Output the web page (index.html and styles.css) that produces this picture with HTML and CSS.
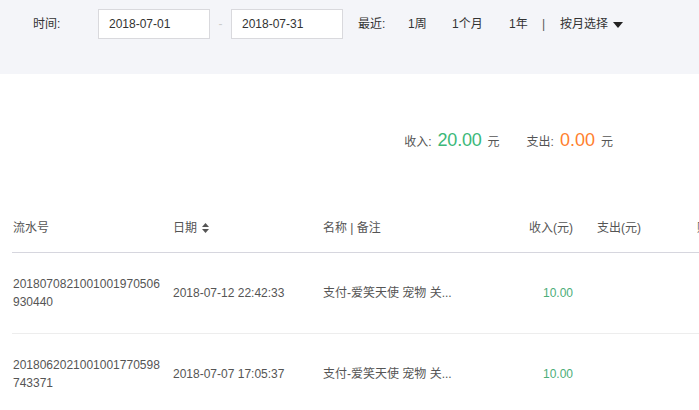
FILE: index.html
```html
<!DOCTYPE html>
<html lang="zh">
<head>
<meta charset="utf-8">
<title>账单</title>
<link rel="stylesheet" href="styles.css">
</head>
<body>
<div class="filter">
  <span class="label">时间:</span>
  <div class="input">2018-07-01</div>
  <span class="dash">-</span>
  <div class="input">2018-07-31</div>
  <span class="recent">最近:</span>
  <span class="opt opt-week">1周</span>
  <span class="opt opt-month">1个月</span>
  <span class="opt opt-year">1年</span>
  <span class="sep">|</span>
  <span class="month-pick">按月选择<svg class="caret" width="10" height="6" viewBox="0 0 10 6"><path d="M0 0H10L5 6Z" fill="#222"/></svg></span>
</div>

<div class="summary">
  <span class="s-label">收入:</span><span class="s-in">20.00</span><span class="s-unit">元</span>
  <span class="s-label s-gap">支出:</span><span class="s-out">0.00</span><span class="s-unit">元</span>
</div>

<div class="table">
  <div class="row head">
    <div class="c c-no">流水号</div>
    <div class="c c-date">日期<svg class="sort" width="7" height="10" viewBox="0 0 7 10"><path d="M3.5 0L7 4H0Z M0 6H7L3.5 10Z" fill="#555"/></svg></div>
    <div class="c c-name">名称 | 备注</div>
    <div class="c c-in">收入(元)</div>
    <div class="c c-out">支出(元)</div>
    <div class="c c-bal">账户余额(元)</div>
  </div>
  <div class="row">
    <div class="c c-no">2018070821001001970506930440</div>
    <div class="c c-date">2018-07-12 22:42:33</div>
    <div class="c c-name">支付-爱笑天使 宠物 关...</div>
    <div class="c c-in money">10.00</div>
    <div class="c c-out"></div>
    <div class="c c-bal"></div>
  </div>
  <div class="row">
    <div class="c c-no">2018062021001001770598743371</div>
    <div class="c c-date">2018-07-07 17:05:37</div>
    <div class="c c-name">支付-爱笑天使 宠物 关...</div>
    <div class="c c-in money">10.00</div>
    <div class="c c-out"></div>
    <div class="c c-bal"></div>
  </div>
</div>
</body>
</html>
```

FILE: styles.css
```css
html, body {
  margin: 0;
  padding: 0;
  background: #fff;
  overflow: hidden;
}
body {
  width: 699px;
  height: 410px;
  font-family: "Liberation Sans", "Noto Sans CJK SC", sans-serif;
  font-size: 12px;
  color: #333;
}
.filter {
  height: 74px;
  background: #f4f5f9;
  display: flex;
  align-items: flex-start;
  padding-left: 33px;
  box-sizing: border-box;
  padding-top: 9px;
}
.filter > span {
  line-height: 31px;
  white-space: nowrap;
}
.label {
  width: 65px;
  color: #333;
}
.input {
  width: 112px;
  height: 30px;
  box-sizing: border-box;
  border: 1px solid #d9d9dd;
  background: #fff;
  padding-left: 10px;
  line-height: 29px;
  color: #333;
}
.dash {
  width: 21px;
  text-align: center;
  color: #ccc;
}
.recent {
  margin-left: 15px;
  width: 50px;
}
.opt-week { width: 44px; }
.opt-month { width: 57px; }
.opt-year { width: 33px; }
.sep { width: 18px; color: #555; }
.month-pick {
  display: inline-flex;
  align-items: center;
}
.caret { margin-left: 5px; }

.summary {
  display: flex;
  justify-content: flex-end;
  align-items: baseline;
  padding-right: 86px;
  margin-top: 51px;
  height: 30px;
  line-height: 30px;
}
.s-label { color: #555; font-size: 12px; margin-right: 6px; }
.s-gap { margin-left: 27px; }
.s-in { color: #3cb879; font-size: 18px; letter-spacing: -0.2px; }
.s-out { color: #ff7f2e; font-size: 18px; }
.s-unit { color: #555; margin-left: 6px; }

.table {
  margin-top: 49px;
  padding-left: 12px;
}
.row {
  display: grid;
  grid-template-columns: 161px 150px 170px 80px 124px 100px;
  height: 80px;
  align-items: center;
  border-bottom: 1px solid #ededed;
  color: #555;
  width: max-content;
}
.row.head {
  height: 48px;
  border-bottom: 1px solid #d6d6de;
  color: #555;
}
.c {
  line-height: 18px;
  white-space: nowrap;
}
.c-no {
  padding-left: 1px;
  white-space: normal;
  word-break: break-all;
  width: 150px;
}
.c-date {
  display: flex;
  align-items: center;
}
.sort { margin-left: 5px; }
.c-in {
  text-align: right;
}
.c-out {
  padding-left: 24px;
}
.money { color: #4cad78; }
```
